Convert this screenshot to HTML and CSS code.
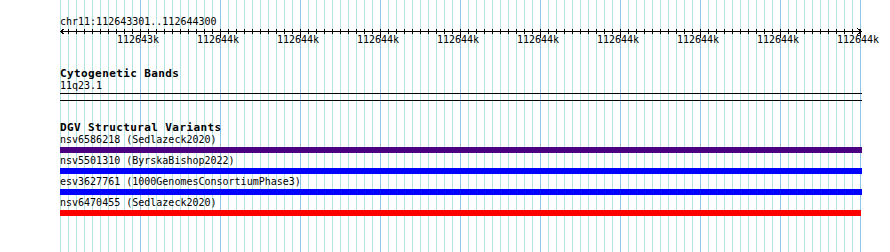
FILE: index.html
```html
<!DOCTYPE html>
<html>
<head>
<meta charset="utf-8">
<link rel="stylesheet" href="styles.css">
</head>
<body>
<div class="view">
  <div class="ruler">
    <div class="loc">chr11:112643301..112644300</div>
    <svg class="scale" width="802" height="6" viewBox="0 0 802 6">
      <defs>
        <pattern id="tick" width="8" height="6" patternUnits="userSpaceOnUse"><rect x="0" y="1" width="1" height="5" fill="#000"/></pattern>
        <pattern id="major" width="80" height="10" patternUnits="userSpaceOnUse"><rect x="0" y="1" width="1" height="9" fill="#000"/></pattern>
      </defs>
      <rect x="8" y="0" width="790" height="6" fill="url(#tick)"/>
      <rect x="80" y="0" width="721" height="10" fill="url(#major)"/>
      <rect x="0" y="3" width="801" height="1" fill="#000"/>
      <path d="M4.5 0.5 L0.5 3.5 L4.5 6.5" stroke="#000" fill="none"/>
      <path d="M797.5 0.5 L801.5 3.5 L797.5 6.5" stroke="#000" fill="none"/>
    </svg>
    <div class="labels">
      <span>112643k</span><span>112644k</span><span>112644k</span><span>112644k</span><span>112644k</span><span>112644k</span><span>112644k</span><span>112644k</span><span>112644k</span><span>112644k</span>
    </div>
  </div>

  <div class="track bands">
    <div class="track-title">Cytogenetic Bands</div>
    <div class="label">11q23.1</div>
    <div class="band"></div>
  </div>

  <div class="track dgv">
    <div class="track-title">DGV Structural Variants</div>
    <div class="feature">
      <div class="label">nsv6586218 (Sedlazeck2020)</div>
      <div class="bar indigo"></div>
    </div>
    <div class="feature">
      <div class="label">nsv5501310 (ByrskaBishop2022)</div>
      <div class="bar blue"></div>
    </div>
    <div class="feature">
      <div class="label">esv3627761 (1000GenomesConsortiumPhase3)</div>
      <div class="bar blue"></div>
    </div>
    <div class="feature">
      <div class="label">nsv6470455 (Sedlazeck2020)</div>
      <div class="bar red" style="width: 801px"></div>
    </div>
  </div>
</div>
</body>
</html>
```

FILE: styles.css
```css
html, body {
  margin: 0;
  padding: 0;
  background: #fff;
  overflow: hidden;
}

body {
  width: 890px;
  height: 252px;
  font-family: "DejaVu Sans Mono", "Liberation Mono", monospace;
  font-size: 10px;
  color: #000;
}

.view {
  margin-left: 60px;
  width: 802px;
  height: 252px;
  display: flex;
  flex-direction: column;
  background-image:
    linear-gradient(to right, #b3e3e8 0 1px, transparent 1px),
    linear-gradient(to right, #8ec5e4 0 1px, transparent 1px),
    linear-gradient(to right, #b3e3e8 0 1px, transparent 1px);
  background-size: 1px 100%, 80px 100%, 8px 100%;
  background-repeat: no-repeat, repeat-x, repeat-x;
  background-position: 0 0, 0 0, 0 0;
}

.loc {
  margin-top: 16px;
  height: 12px;
  line-height: 12px;
  white-space: nowrap;
}

.scale {
  display: block;
  overflow: visible;
  shape-rendering: crispEdges;
}

.labels {
  display: flex;
  margin-left: 38px;
  height: 12px;
  line-height: 12px;
  white-space: nowrap;
}

.labels span {
  flex: 0 0 80px;
  text-align: center;
}

.track {
  display: flex;
  flex-direction: column;
}

.bands {
  margin-top: 22px;
}

.dgv {
  margin-top: 21px;
}

.track-title {
  height: 12px;
  line-height: 12px;
  font-size: 11px;
  font-weight: bold;
  letter-spacing: 0.4px;
  white-space: nowrap;
}

.label {
  height: 12px;
  line-height: 12px;
  white-space: nowrap;
}

.band {
  margin-top: 1px;
  height: 6px;
  border-top: 1px solid #000;
  border-bottom: 1px solid #000;
}

.feature {
  display: flex;
  flex-direction: column;
  padding-bottom: 2px;
}

.bar {
  margin-top: 1px;
  height: 6px;
  width: 802px;
}

.indigo { background: #4b0082; }
.blue { background: #0000ff; }
.red { background: #ff0000; }
```
